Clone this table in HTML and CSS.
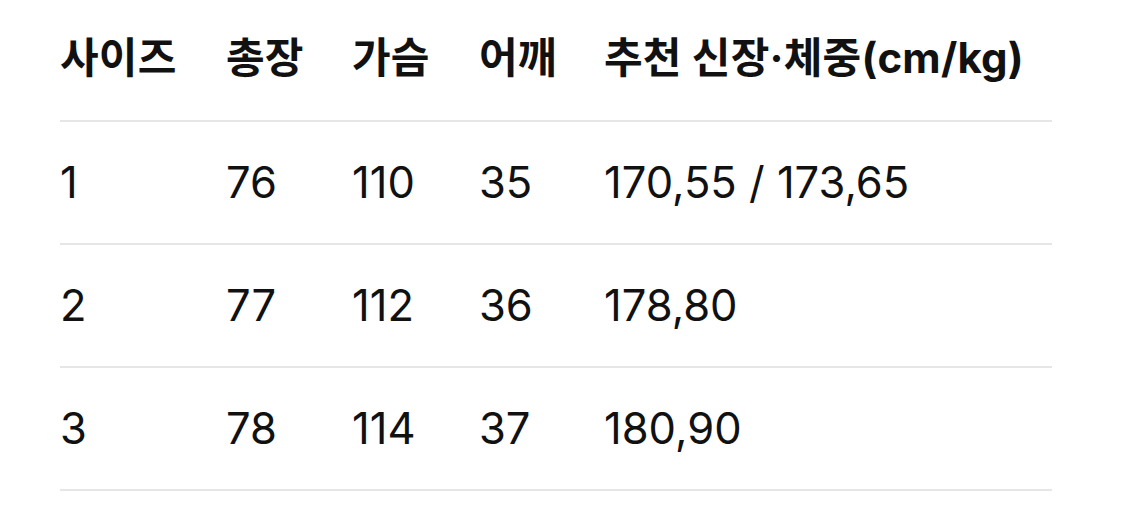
FILE: index.html
```html
<!DOCTYPE html>
<html lang="ko">
<head>
<meta charset="utf-8">
<link rel="stylesheet" href="styles.css">
</head>
<body>
<div class="wrap">
  <table class="size-table">
    <colgroup>
      <col class="c1"><col class="c2"><col class="c3"><col class="c4"><col class="c5">
    </colgroup>
    <thead>
      <tr><th>사이즈</th><th>총장</th><th>가슴</th><th>어깨</th><th>추천 신장·체중(cm/kg)</th></tr>
    </thead>
    <tbody>
      <tr><td>1</td><td>76</td><td>110</td><td>35</td><td>170,55 / 173,65</td></tr>
      <tr><td>2</td><td>77</td><td>112</td><td>36</td><td>178,80</td></tr>
      <tr><td>3</td><td>78</td><td>114</td><td>37</td><td>180,90</td></tr>
    </tbody>
  </table>
</div>
</body>
</html>
```
FILE: styles.css
```css
html, body {
  margin: 0;
  padding: 0;
  background: #fff;
}
.wrap {
  padding: 0 0 0 60px;
}
.size-table {
  width: 992px;
  border-collapse: collapse;
  table-layout: fixed;
  font-family: Inter, "Noto Sans CJK KR", sans-serif;
  color: #111;
}
.c1 { width: 166px; }
.c2 { width: 126px; }
.c3 { width: 127px; }
.c4 { width: 125px; }
.c5 { width: auto; }
.size-table th,
.size-table td {
  text-align: left;
  padding: 0;
  border-bottom: 2px solid #e6e6e6;
  vertical-align: middle;
  white-space: nowrap;
  line-height: 1.2;
}
.size-table th {
  font-size: 42px;
  font-weight: 700;
  height: 121px;
  padding-bottom: 4px;
  box-sizing: border-box;
  letter-spacing: 0.2px;
}
.size-table td {
  font-size: 43.5px;
  font-weight: 400;
  height: 121px;
}
```
